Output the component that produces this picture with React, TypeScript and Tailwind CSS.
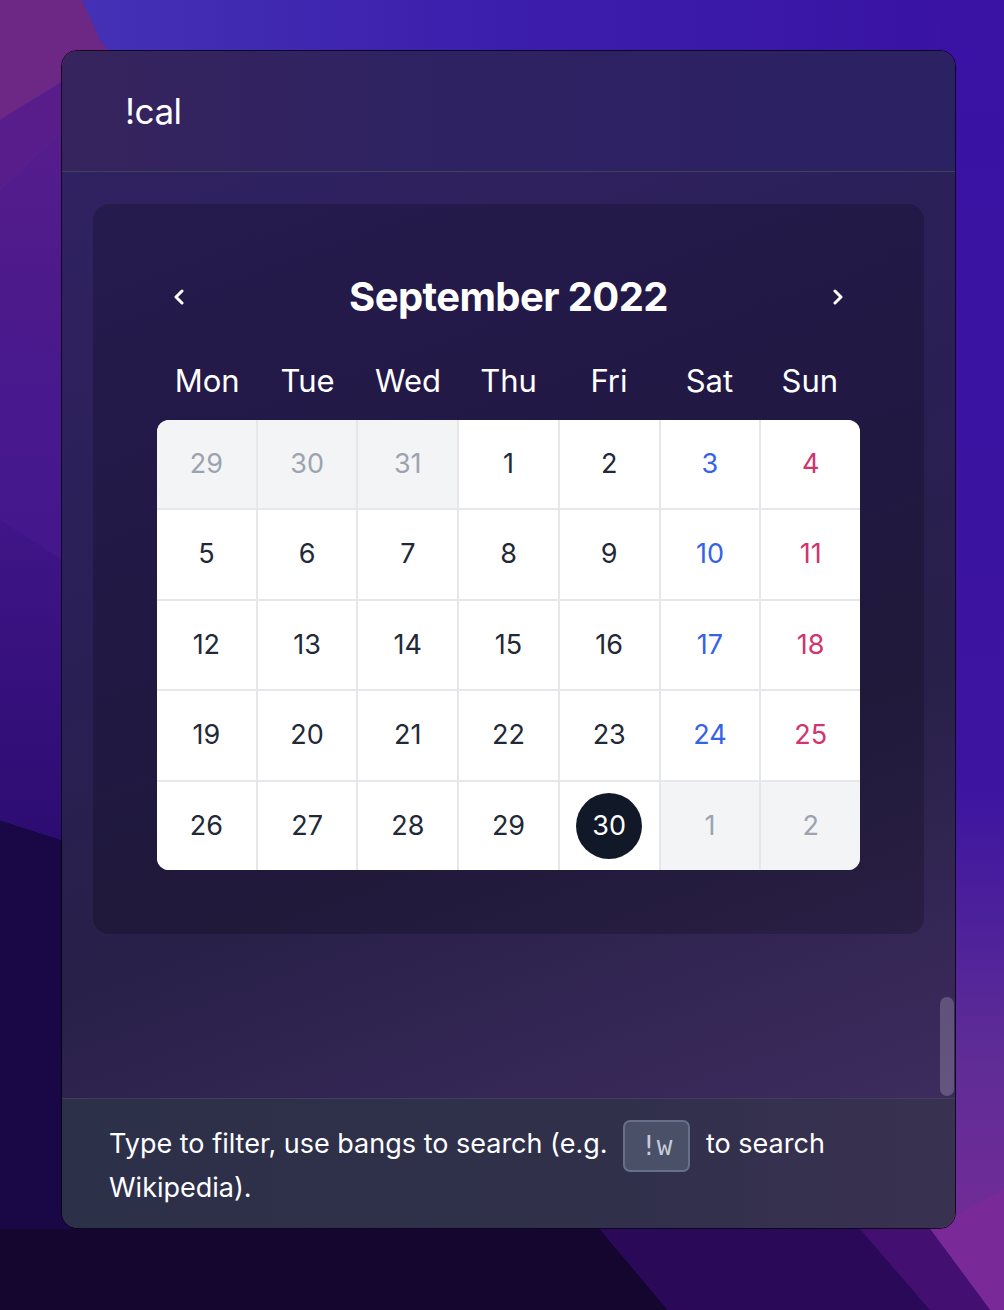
import React from 'react';

type Day = { n: number; muted?: boolean; today?: boolean };

const weekdays = ['Mon', 'Tue', 'Wed', 'Thu', 'Fri', 'Sat', 'Sun'];

// September 2022, weeks starting Monday
const weeks: Day[][] = [
  [{ n: 29, muted: true }, { n: 30, muted: true }, { n: 31, muted: true }, { n: 1 }, { n: 2 }, { n: 3 }, { n: 4 }],
  [{ n: 5 }, { n: 6 }, { n: 7 }, { n: 8 }, { n: 9 }, { n: 10 }, { n: 11 }],
  [{ n: 12 }, { n: 13 }, { n: 14 }, { n: 15 }, { n: 16 }, { n: 17 }, { n: 18 }],
  [{ n: 19 }, { n: 20 }, { n: 21 }, { n: 22 }, { n: 23 }, { n: 24 }, { n: 25 }],
  [{ n: 26 }, { n: 27 }, { n: 28 }, { n: 29 }, { n: 30, today: true }, { n: 1, muted: true }, { n: 2, muted: true }],
];

const Wallpaper = () => (
  <svg className="absolute inset-0 h-full w-full" viewBox="0 0 1004 1310" preserveAspectRatio="none">
    <defs>
      <linearGradient id="base" x1="0" y1="0" x2="1" y2="0">
        <stop offset="0" stopColor="#4535b8" />
        <stop offset="0.5" stopColor="#3c1eac" />
        <stop offset="1" stopColor="#3912a2" />
      </linearGradient>
      <linearGradient id="rightGlow" x1="0" y1="0" x2="0" y2="1">
        <stop offset="0" stopColor="#3a12a4" />
        <stop offset="0.6" stopColor="#3c14a0" />
        <stop offset="0.8" stopColor="#5e2c96" />
        <stop offset="1" stopColor="#7a2c98" />
      </linearGradient>
      <linearGradient id="leftBand" x1="0" y1="0" x2="0" y2="1">
        <stop offset="0" stopColor="#561d8c" />
        <stop offset="0.5" stopColor="#42168a" />
        <stop offset="1" stopColor="#2c0c72" />
      </linearGradient>
    </defs>
    <rect width="1004" height="1310" fill="url(#base)" />
    <rect x="940" y="0" width="64" height="1310" fill="url(#rightGlow)" />
    <polygon points="0,0 82,0 100,40 110,52 0,120" fill="#6d2784" />
    <polygon points="0,120 110,52 70,110 62,130 0,190" fill="#581d8a" />
    <polygon points="0,190 62,130 62,840 0,820" fill="url(#leftBand)" />
    <polygon points="0,320 62,360 62,560 0,520" fill="#4a1a92" opacity="0.5" />
    <polygon points="0,820 62,840 80,1200 80,1310 0,1310" fill="#1a0846" />
    <polygon points="0,1229 600,1229 668,1310 0,1310" fill="#14062f" />
    <polygon points="600,1229 956,1229 1004,1270 1004,1310 668,1310" fill="#2a0a58" />
    <polygon points="930,1229 1004,1190 1004,1310 990,1310" fill="#7a2a98" />
    <polygon points="860,1229 930,1229 990,1310 930,1310" fill="#4a1278" opacity="0.8" />
  </svg>
);

const Chevron = ({ dir }: { dir: 'left' | 'right' }) => (
  <svg width="12" height="16" viewBox="0 0 12 16" className="text-white">
    <polyline
      points={dir === 'left' ? '9,2 3,8 9,14' : '3,2 9,8 3,14'}
      fill="none"
      stroke="currentColor"
      strokeWidth="3"
      strokeLinecap="round"
      strokeLinejoin="round"
    />
  </svg>
);

function dayColor(d: Day, col: number) {
  if (d.muted) return 'text-[#9ca3af]';
  if (col === 5) return 'text-[#3563e6]';
  if (col === 6) return 'text-[#d1346f]';
  return 'text-[#1f2937]';
}

export default function App() {
  return (
    <div className="relative h-[1310px] w-full overflow-hidden font-['Inter','Noto_Sans',sans-serif]">
      <Wallpaper />

      <div className="relative pt-[50px] pl-[61px]">
        {/* window */}
        <div className="flex h-[1179px] w-[895px] flex-col overflow-hidden rounded-[16px] border border-black/80 shadow-[inset_0_0_0_1px_rgba(255,255,255,0.22)]">
          {/* header */}
          <div className="flex h-[121px] items-center border-b border-[#3a4558] bg-[linear-gradient(90deg,#36245d_0%,#2e2263_45%,#2c2163_100%)] pl-[63px]">
            <span className="text-[35px] leading-none tracking-[-0.5px] text-white">!cal</span>
          </div>

          {/* content */}
          <div className="relative flex-1 bg-[linear-gradient(160deg,#302262_0%,#2a1f55_40%,#282049_65%,#3d2b5e_100%)] px-[31px] pt-[32px]">
            <div className="rounded-[16px] bg-black/20 p-16">
              {/* month header */}
              <div className="flex h-[58px] items-center justify-between px-[16px]">
                <Chevron dir="left" />
                <div className="text-[40px] leading-none font-bold tracking-[-0.6px] text-white">September 2022</div>
                <Chevron dir="right" />
              </div>

              {/* weekdays */}
              <div className="grid grid-cols-7 pt-[31px] pb-[15px]">
                {weekdays.map((w) => (
                  <div key={w} className="text-center text-[31px] leading-[48px] text-white">
                    {w}
                  </div>
                ))}
              </div>

              {/* days grid */}
              <div className="grid grid-cols-7 gap-[2px] overflow-hidden rounded-xl bg-[#e5e7eb]">
                {weeks.flatMap((week, wi) =>
                  week.map((d, col) => (
                    <div
                      key={`${wi}-${col}`}
                      className={`flex h-[88.4px] items-center justify-center ${d.muted ? 'bg-[#f3f4f6]' : 'bg-white'}`}
                    >
                      {d.today ? (
                        <span className="flex h-[66px] w-[66px] items-center justify-center rounded-full bg-[#111827] text-[27px] text-white">
                          {d.n}
                        </span>
                      ) : (
                        <span className={`text-[27px] ${dayColor(d, col)}`}>{d.n}</span>
                      )}
                    </div>
                  ))
                )}
              </div>
            </div>

            {/* scrollbar thumb */}
            <div className="absolute right-[1px] bottom-[2px] h-[99px] w-[14px] rounded-full bg-white/20" />
          </div>

          {/* footer */}
          <div className="border-t border-[#40405c] bg-[linear-gradient(90deg,#2d3049_0%,#30304b_60%,#393150_100%)] px-[47px] pt-[23px] pb-[19px]">
            <p className="text-[27px] leading-[43px] text-white">
              <span>Type to filter, use bangs to search (e.g.</span>{' '}
              <kbd className="mx-[8px] -my-[6px] inline-block rounded-[7px] border-2 border-[#66708a] bg-[#4a5068] px-[16px] align-middle font-['DejaVu_Sans_Mono',monospace] text-[26px] leading-[48px] text-[#c8ccd8]">
                !w
              </kbd>{' '}
              <span>to search</span> <span>Wikipedia).</span>
            </p>
          </div>
        </div>
      </div>
    </div>
  );
}
